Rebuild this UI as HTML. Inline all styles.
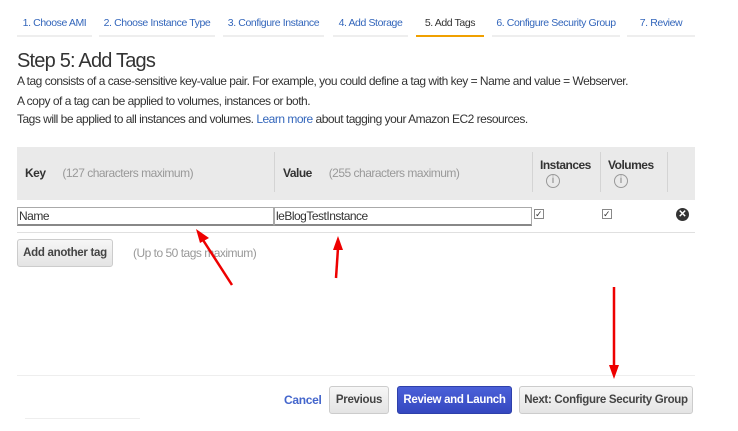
<!DOCTYPE html><html><head><style>
*{margin:0;padding:0;box-sizing:border-box}
body{width:738px;height:431px;background:#fff;font-family:"Liberation Sans",sans-serif;position:relative;overflow:hidden;color:#333}
.a{position:absolute;white-space:nowrap}
.tab{position:absolute;top:10px;height:27px;border-bottom:2px solid #eee;font-size:10.5px;color:#3366bb;text-align:center;line-height:26px;letter-spacing:-0.4px;white-space:nowrap}
.t{font-size:12px;letter-spacing:-0.5px;color:#333}
.btn{position:absolute;top:386px;height:28px;border:1px solid #ccc;border-radius:3px;background:linear-gradient(#f6f6f6,#e4e4e4);font-size:11.5px;font-weight:bold;line-height:26px;text-align:center;color:#444;white-space:nowrap;letter-spacing:-0.3px}
</style></head><body>
<div class="tab" style="left:17px;width:75px">1. Choose AMI</div>
<div class="tab" style="left:99px;width:116px">2. Choose Instance Type</div>
<div class="tab" style="left:223px;width:101px">3. Configure Instance</div>
<div class="tab" style="left:333px;width:75px">4. Add Storage</div>
<div class="tab" style="left:416px;width:68px;border-bottom-color:#f0a000;color:#333">5. Add Tags</div>
<div class="tab" style="left:492px;width:128px">6. Configure Security Group</div>
<div class="tab" style="left:627px;width:68px">7. Review</div>
<div class="a" style="left:17px;top:50px;font-size:20px;color:#333;letter-spacing:-0.8px">Step 5: Add Tags</div>
<div class="a t" style="left:17px;top:74px">A tag consists of a case-sensitive key-value pair. For example, you could define a tag with key = Name and value = Webserver.</div>
<div class="a t" style="left:17px;top:94px">A copy of a tag can be applied to volumes, instances or both.</div>
<div class="a t" style="left:17px;top:112px">Tags will be applied to all instances and volumes. <span style="color:#3366bb">Learn more</span> about tagging your Amazon EC2 resources.</div>
<div class="a" style="left:17px;top:147px;width:678px;height:53px;background:#eaeaea"></div>
<div class="a" style="left:274px;top:152px;width:1px;height:40px;background:#d4d4d4"></div>
<div class="a" style="left:532px;top:152px;width:1px;height:40px;background:#d4d4d4"></div>
<div class="a" style="left:600px;top:152px;width:1px;height:40px;background:#d4d4d4"></div>
<div class="a" style="left:667px;top:152px;width:1px;height:40px;background:#d4d4d4"></div>
<div class="a t" style="left:25px;top:166px;font-weight:bold">Key <span style="font-weight:normal;color:#999;margin-left:14px">(127 characters maximum)</span></div>
<div class="a t" style="left:283px;top:166px;font-weight:bold">Value <span style="font-weight:normal;color:#999;margin-left:14px">(255 characters maximum)</span></div>
<div class="a t" style="left:540px;top:158px;font-weight:bold">Instances</div>
<div class="a t" style="left:608px;top:158px;font-weight:bold">Volumes</div>
<div class="a" style="left:546px;top:174px;width:14px;height:14px;border:1px solid #999;border-radius:50%;font-size:10px;text-align:center;line-height:12px;color:#777">i</div>
<div class="a" style="left:614px;top:174px;width:14px;height:14px;border:1px solid #999;border-radius:50%;font-size:10px;text-align:center;line-height:12px;color:#777">i</div>
<div class="a t" style="left:17px;top:207px;width:257px;height:19px;border:1px solid #aaa;border-bottom:2px solid #888;padding:2px 1px;line-height:13px">Name</div>
<div class="a t" style="left:274px;top:207px;width:258px;height:19px;border:1px solid #aaa;border-bottom:2px solid #888;padding:2px 1px;line-height:13px">leBlogTestInstance</div>
<div class="a" style="left:534px;top:209px;width:10px;height:10px;border:1px solid #888;font-size:9px;line-height:8px">✓</div>
<div class="a" style="left:602px;top:209px;width:10px;height:10px;border:1px solid #888;font-size:9px;line-height:8px">✓</div>
<div class="a" style="left:676px;top:208px;width:13px;height:13px;border-radius:50%;background:#333;color:#fff;font-size:10px;font-weight:bold;text-align:center;line-height:13px">✕</div>
<div class="a" style="left:17px;top:232px;width:678px;height:1px;background:#e0e0e0"></div>
<div class="btn" style="left:17px;top:239px;width:96px">Add another tag</div>
<div class="a t" style="left:133px;top:246px;color:#999">(Up to 50 tags maximum)</div>
<div class="a" style="left:17px;top:375px;width:678px;height:1px;background:#eee"></div>
<div class="a" style="left:284px;top:393px;font-size:12px;font-weight:bold;color:#4466cc;letter-spacing:-0.3px">Cancel</div>
<div class="btn" style="left:329px;width:60px">Previous</div>
<div class="btn" style="left:397px;width:115px;background:linear-gradient(#4a60d8,#3548c0);border-color:#2e40aa;color:#fff">Review and Launch</div>
<div class="btn" style="left:519px;width:174px">Next: Configure Security Group</div>
<div class="a" style="left:25px;top:418px;width:115px;height:1px;background:#eee"></div>
<svg class="a" style="left:0;top:0" width="738" height="431">
<g stroke="#e00" stroke-width="2.5" fill="#e00">
<line x1="232" y1="285" x2="203" y2="240"/><polygon points="196,229 209,238 200,243" stroke="none"/>
<line x1="336" y1="278" x2="338" y2="248"/><polygon points="338,236 343,250 333,250" stroke="none"/>
<line x1="614" y1="287" x2="614" y2="366"/><polygon points="614,379 609,365 619,365" stroke="none"/>
</g></svg>
</body></html>
